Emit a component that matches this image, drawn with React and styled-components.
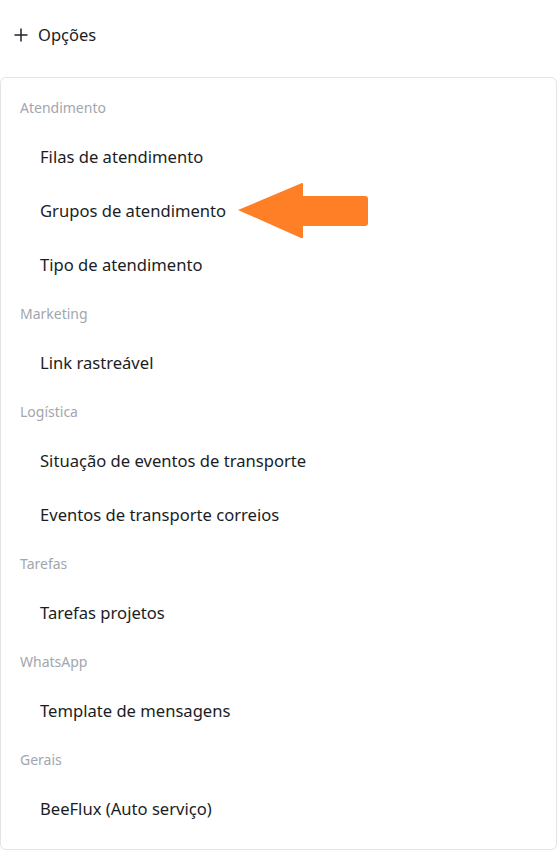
import React from 'react'
import styled, { createGlobalStyle } from 'styled-components'

const GlobalStyle = createGlobalStyle`
  body {
    margin: 0;
    background: #ffffff;
    font-family: "Noto Sans", "Open Sans", sans-serif;
  }
`

const sections = [
  { title: 'Atendimento', items: ['Filas de atendimento', 'Grupos de atendimento', 'Tipo de atendimento'] },
  { title: 'Marketing', items: ['Link rastreável'] },
  { title: 'Logística', items: ['Situação de eventos de transporte', 'Eventos de transporte correios'] },
  { title: 'Tarefas', items: ['Tarefas projetos'] },
  { title: 'WhatsApp', items: ['Template de mensagens'] },
  { title: 'Gerais', items: ['BeeFlux (Auto serviço)'] },
]

function App() {
  return (
    <Page>
      <GlobalStyle />
      <OptionsButton>
        <svg width="16" height="16" viewBox="0 0 16 16">
          <path d="M8 1.5v13M1.5 8h13" stroke="#1f2328" strokeWidth="1.5" fill="none" />
        </svg>
        Opções
      </OptionsButton>

      <Card>
        {sections.map((s) => (
          <div key={s.title}>
            <SectionTitle>{s.title}</SectionTitle>
            {s.items.map((item) => (
              <MenuItem key={item}>
                {item}
                {item === 'Grupos de atendimento' && (
                  <Arrow width="134" height="58" viewBox="0 0 134 58">
                    <path
                      d="M2 28 L66 1 Q67 0.5 67 2 L67 14 L129 14 Q132 14 132 17 L132 41 Q132 44 129 44 L67 44 L67 55 Q67 57 65 56 Z"
                      fill="#ff7f27"
                    />
                  </Arrow>
                )}
              </MenuItem>
            ))}
          </div>
        ))}
      </Card>
    </Page>
  )
}

const Page = styled.div`
  width: 557px;
  position: relative;
`

const OptionsButton = styled.div`
  display: flex;
  align-items: center;
  gap: 9px;
  height: 69px;
  padding-left: 13px;
  font-size: 16.5px;
  color: #1a1d24;
`

const Card = styled.div`
  margin-top: 8px;
  width: 555px;
  border: 1px solid #e4e4e4;
  border-radius: 6px;
  padding: 7px 0 14px;
  box-shadow: 0 1px 2px rgba(0, 0, 0, 0.04);
`

const SectionTitle = styled.div`
  height: 44px;
  display: flex;
  align-items: center;
  padding-left: 19px;
  font-size: 14px;
  color: #a2a6ae;
`

const MenuItem = styled.div`
  position: relative;
  height: 54px;
  display: flex;
  align-items: center;
  padding-left: 39px;
  font-size: 16.6px;
  color: #1a1d24;
`

const Arrow = styled.svg`
  position: absolute;
  left: 235px;
  top: -1px;
`

export default App
